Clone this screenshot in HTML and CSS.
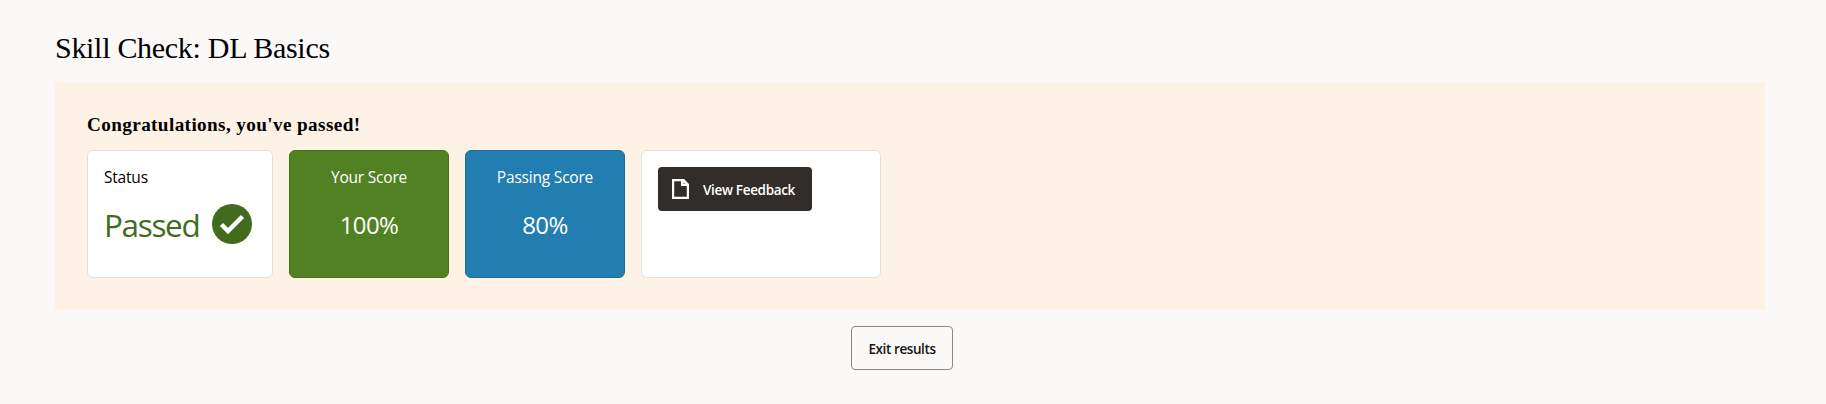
FILE: index.html
```html
<!DOCTYPE html>
<html lang="en">
<head>
<meta charset="utf-8">
<title>Skill Check: DL Basics</title>
<link rel="stylesheet" href="styles.css">
</head>
<body>
<main class="page">
  <h1 class="title">Skill Check: DL Basics</h1>
  <section class="panel">
    <h2 class="message">Congratulations, you've passed!</h2>
    <div class="cards">
      <div class="card status">
        <div class="label">Status</div>
        <div class="result">
          <span class="result-text">Passed</span>
          <svg class="check" viewBox="0 0 40 40"><circle cx="20" cy="20" r="20"/><path d="M9.500 20.500l6.500 6.500L30.500 12.500"/></svg>
        </div>
      </div>
      <div class="card score own">
        <div class="label">Your Score</div>
        <div class="value">100%</div>
      </div>
      <div class="card score passing">
        <div class="label">Passing Score</div>
        <div class="value">80%</div>
      </div>
      <div class="card actions">
        <button class="button feedback">
          <svg class="file" viewBox="0 0 17 20"><path fill-rule="evenodd" d="M0 0H12L17 5V20H0ZM2.200 2.200V17.800H14.800V7H9V2.200Z"/><path class="fold" d="M11.500 4.500h1"/></svg>
          <span>View Feedback</span>
        </button>
      </div>
    </div>
  </section>
  <div class="footer"><button class="button exit">Exit results</button></div>
</main>
</body>
</html>
```
FILE: styles.css
```css
* { box-sizing: border-box; }
body {
  margin: 0;
  background: #fbf9f8;
  color: #000;
  font-family: "Open Sans", "Noto Sans", sans-serif;
}
.page { padding: 28px 61px 0 55px; }
.title {
  margin: 0;
  height: 54px;
  font: 400 30px/40px "Liberation Serif", serif;
  letter-spacing: -.3px;
  white-space: nowrap;
}
.panel {
  height: 228px;
  padding: 31px 32px 32px;
  background: #fef1e5;
}
.message {
  margin: 0 0 13px;
  font: 700 19.2px/24px "Liberation Serif", serif;
  letter-spacing: .38px;
}
.cards { display: flex; gap: 16px; }
.card {
  height: 128px;
  padding: 16px;
  border: 1px solid #e4e1dd;
  border-radius: 6px;
  background: #fff;
}
.status { width: 186px; }
.score {
  width: 160px;
  color: #fff;
  text-align: center;
}
.own { background: #508223; border-color: #457317; }
.passing { background: #227eb0; border-color: #1b6e9c; }
.actions { width: 240px; }
.label { height: 22px; font-size: 15.5px; line-height: 20px; letter-spacing: -.2px; white-space: nowrap; }
.result { display: flex; align-items: center; height: 48px; margin-top: 11px; gap: 12px; }
.result-text { width: 96px; padding-top: 2px; font-size: 31.5px; line-height: 44px; letter-spacing: -1.35px; color: #436b1d; }
.check { width: 40px; height: 40px; flex: none; fill: #436b1d; }
.check path { fill: none; stroke: #fff; stroke-width: 4.5; }
.value { margin-top: 20px; font-size: 24px; line-height: 32px; letter-spacing: -.6px; }
.button {
  display: flex;
  align-items: center;
  height: 44px;
  padding: 0;
  border-radius: 4px;
  font: 600 13.5px/20px "Open Sans", sans-serif;
  letter-spacing: -.33px;
  white-space: nowrap;
}
.feedback {
  width: 154px;
  padding-left: 14px;
  gap: 14px;
  border: 0;
  background: #312d2a;
  color: #fff;
}
.feedback span { padding-top: 2px; }
.file { width: 17px; height: 20px; fill: #fff; }
.fold { stroke: #312d2a; stroke-width: 1; }
.footer { display: flex; justify-content: center; padding: 16px 16px 0 0; }
.exit {
  width: 102px;
  padding-top: 2px;
  justify-content: center;
  border: 1px solid #8b8785;
  background: transparent;
  color: #161513;
  letter-spacing: -.4px;
}
```
